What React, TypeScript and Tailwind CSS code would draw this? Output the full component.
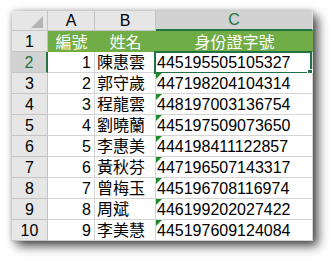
const rows: [number, string, string][] = [
  [1, "陳惠雲", "445195505105327"],
  [2, "郭守歲", "447198204104314"],
  [3, "程龍雲", "448197003136754"],
  [4, "劉曉蘭", "445197509073650"],
  [5, "李惠美", "444198411122857"],
  [6, "黃秋芬", "447196507143317"],
  [7, "曾梅玉", "445196708116974"],
  [8, "周斌", "446199202027422"],
  [9, "李美慧", "445197609124084"],
];

const font = "font-['Liberation_Sans','Noto_Sans_CJK_TC',sans-serif] text-[16px] leading-[18px]";
const cell = "h-[21px] border-r border-b border-[#d4d4d4] bg-white flex items-end overflow-hidden whitespace-nowrap";
const rowHead = "w-[36px] h-[21px] border-r border-b border-[#c4c4c4] flex items-end justify-center";

function ErrorMark() {
  return (
    <svg className="absolute left-0 top-0" width="6" height="6" viewBox="0 0 6 6">
      <polygon points="0,0 6,0 0,6" fill="#1e8a2a" />
    </svg>
  );
}

export default function App() {
  return (
    <div className="w-[333px] h-[261px] bg-white pl-[12px] pt-[11px]">
      <div className={`w-[301px] text-black shadow-[5px_5px_10px_rgba(0,0,0,0.7),0_0_5px_rgba(0,0,0,0.25)] ${font}`}>
        {/* column headers */}
        <div className="flex h-[20px]">
          <div className="relative w-[36px] h-[20px] bg-[#e6e6e6] border-r border-b border-[#c4c4c4]">
            <svg className="absolute right-[4px] bottom-[2px]" width="12" height="12" viewBox="0 0 12 12">
              <polygon points="12,0 12,12 0,12" fill="#b4b4b4" />
            </svg>
          </div>
          <div className="w-[47px] bg-[#e6e6e6] border-r border-b border-[#c4c4c4] flex items-end justify-center">A</div>
          <div className="w-[61px] bg-[#e6e6e6] border-r border-b border-[#c4c4c4] flex items-end justify-center">B</div>
          <div className="w-[157px] bg-[#d2d2d2] border-r border-[#e0e0e0] border-b-2 border-b-[#217346] flex items-end justify-center text-[#217346]">C</div>
        </div>
        {/* row 1 */}
        <div className="flex">
          <div className={`${rowHead} bg-[#e6e6e6]`}>1</div>
          <div className="w-[265px] h-[21px] bg-[#70ad47] text-white flex items-end">
            <div className="w-[47px] text-center">編號</div>
            <div className="w-[61px] text-center">姓名</div>
            <div className="w-[157px] text-center">身份證字號</div>
          </div>
        </div>
        {rows.map(([n, name, id], i) => {
          const sel = i === 0;
          return (
            <div key={n} className="flex">
              <div
                className={`${rowHead} ${sel ? "bg-[#d2d2d2] text-[#217346] border-r-2 border-r-[#217346]" : "bg-[#e6e6e6]"}`}
              >
                {n + 1}
              </div>
              <div className={`${cell} w-[47px] justify-end pr-[3px]`}>{n}</div>
              <div className={`${cell} w-[61px] pl-[2px]`}>{name}</div>
              <div className={`${cell} relative w-[157px] pl-[1px] overflow-visible`}>
                {!sel && <ErrorMark />}
                {id}
                {sel && (
                  <div className="absolute -left-[2px] -top-px w-[158px] h-[23px] border-2 border-[#217346]">
                    <div className="absolute -right-[3px] -bottom-[3px] w-[6px] h-[6px] bg-[#217346] border border-white" />
                  </div>
                )}
              </div>
            </div>
          );
        })}
      </div>
    </div>
  );
}
